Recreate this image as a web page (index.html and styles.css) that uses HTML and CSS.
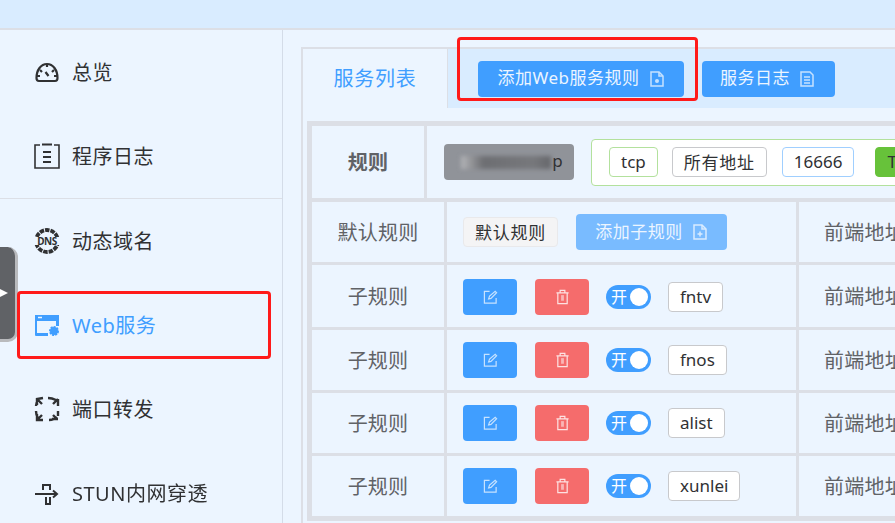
FILE: index.html
```html
<!DOCTYPE html>
<html lang="zh-CN">
<head>
  <meta charset="UTF-8">
  <meta name="viewport" content="width=device-width, initial-scale=1.0">
  <title>Web服务</title>
  <link rel="stylesheet" href="styles.css">
</head>
<body>
<div class="app">
  <div class="topbar"></div>
  <div class="layout">
    <nav class="sidebar">
      <a class="menu-item">
        <svg class="menu-icon" viewBox="0 0 26 26" fill="none" stroke="#303133" stroke-width="2.200"><path d="M5 22h16c1.500 0 2.500-1 2.500-3C23.500 11 19 5 13 5S2.500 11 2.500 19c0 2 1 3 2.500 3z"/><path d="M13 5v3M6 11l2 2M20 11l-2 2M3 17h3M20 17h3M11.500 13l3 4"/></svg>
        总览
      </a>
      <a class="menu-item">
        <svg class="menu-icon" viewBox="0 0 26 26" fill="none" stroke="#303133" stroke-width="1.600"><path d="M6 2H1v23h24V2h-5"/><path d="M8 1.500h10M9 9h8M9 14h8M9 19h8" stroke-width="2"/></svg>
        程序日志
      </a>
      <div class="menu-divider"></div>
      <a class="menu-item">
        <svg class="menu-icon" viewBox="0 0 26 26" fill="none"><circle cx="13" cy="13" r="11" stroke="#303133" stroke-width="3.800" stroke-dasharray="4.500 1"/><rect x="0" y="9" width="26" height="8" fill="#ecf5ff"/><text x="13" y="17" text-anchor="middle" class="dns-text">DNS</text></svg>
        动态域名
      </a>
      <a class="menu-item active">
        <svg class="menu-icon" viewBox="0 0 26 26"><path d="M2 3h23v11h-3v-5H3v12h11v3H2a1 1 0 0 1-1-1V4a1 1 0 0 1 1-1z" fill="#409eff"/><path d="M1 3h24v6H1z" fill="#409eff"/><path d="M4 5.500h4" stroke="#ecf5ff" stroke-width="1.500"/><circle cx="20" cy="19" r="4" fill="#409eff" stroke="#409eff" stroke-width="2" stroke-dasharray="2 1"/></svg>
        Web服务
      </a>
      <a class="menu-item">
        <svg class="menu-icon" viewBox="0 0 26 26" fill="none" stroke="#303133" stroke-width="2.400"><path d="M2 10c0-2 .5-4 2-6M9 2L3 3v6M3 3l5 5"/><path d="M14 2c3 0 6 1 8 2M24 10V3M24 3l-5 5"/><path d="M2 15c0 3 .5 5 2 7M3 18v6h6M3 24l5-5"/><path d="M15 24c3 0 6-1 8-3M24 15v5M24 23h-6M23 23l-4-4"/></svg>
        端口转发
      </a>
      <a class="menu-item">
        <svg class="menu-icon" viewBox="0 0 26 26" fill="none" stroke="#303133" stroke-width="2"><path d="M1 14h21M19 10.500l4 3.500-4 3.500"/><path d="M9 10V5h7v5M12 17v7h4v-7"/></svg>
        STUN内网穿透
      </a>
    </nav>

    <main class="main">
      <section class="panel">
        <div class="tab-header">
          <div class="tab-active">服务列表</div>
          <button class="btn btn-add">添加Web服务规则
            <svg class="btn-icon" viewBox="0 0 16 16" fill="none" stroke="#c6e2ff" stroke-width="1.500"><path d="M2 1h8l4 4v10H2z"/><path d="M10 1v4h4"/><circle cx="8" cy="10" r="2" fill="#c6e2ff" stroke="none"/></svg>
          </button>
          <button class="btn btn-log">服务日志
            <svg class="btn-icon" viewBox="0 0 16 16" fill="none" stroke="#c6e2ff" stroke-width="1.500"><path d="M2 1h9l3 3v11H2z"/><path d="M5 6h6M5 9h6M5 12h6"/></svg>
          </button>
        </div>

        <div class="rule-table">
          <div class="row row-rule">
            <div class="cell cell-rule-name">规则</div>
            <div class="cell cell-rule-body">
              <div class="masked-tag"><span class="smudge"></span>p</div>
              <div class="rule-box">
                <span class="tag tag-green">tcp</span>
                <span class="tag tag-gray tag-wide tag-after-addr">所有地址</span>
                <span class="tag tag-blue tag-after-port">16666</span>
                <span class="tag tag-solid">TLS</span>
              </div>
            </div>
          </div>

          <div class="row">
            <div class="cell cell-name">默认规则</div>
            <div class="cell cell-body">
              <span class="tag tag-default tag-wide">默认规则</span>
              <button class="btn btn-sub">添加子规则
                <svg class="btn-icon" viewBox="0 0 16 16" fill="none" stroke="#d9ecff" stroke-width="1.500"><path d="M2 1h8l4 4v10H2z"/><path d="M10 1v4h4M5.500 10h5M8 7.500v5"/></svg>
              </button>
            </div>
            <div class="cell cell-addr">前端地址</div>
          </div>

          <div class="row row-first">
            <div class="cell cell-name">子规则</div>
            <div class="cell cell-body">
              <button class="btn-square btn-edit"><svg class="sq-icon" viewBox="0 0 16 16" fill="none" stroke="#c6e2ff" stroke-width="1.300"><path d="M7 2H1.500v12.500H14V9"/><path d="M6 10l1-3 6-5 1.500 1.500-6 6z"/></svg></button>
              <button class="btn-square btn-del"><svg class="sq-icon" viewBox="0 0 16 16" fill="none" stroke="#fde2e2" stroke-width="1.300"><path d="M1.500 3.500h13M5.500 3V1h5v2M3 3.500v11.500h10V3.500"/><path d="M6.500 6v6h3V6z" fill="#fab6b6" stroke="none"/></svg></button>
              <span class="switch">开<i class="knob"></i></span>
              <span class="tag tag-gray">fntv</span>
            </div>
            <div class="cell cell-addr">前端地址</div>
          </div>

          <div class="row">
            <div class="cell cell-name">子规则</div>
            <div class="cell cell-body">
              <button class="btn-square btn-edit"><svg class="sq-icon" viewBox="0 0 16 16" fill="none" stroke="#c6e2ff" stroke-width="1.300"><path d="M7 2H1.500v12.500H14V9"/><path d="M6 10l1-3 6-5 1.500 1.500-6 6z"/></svg></button>
              <button class="btn-square btn-del"><svg class="sq-icon" viewBox="0 0 16 16" fill="none" stroke="#fde2e2" stroke-width="1.300"><path d="M1.500 3.500h13M5.500 3V1h5v2M3 3.500v11.500h10V3.500"/><path d="M6.500 6v6h3V6z" fill="#fab6b6" stroke="none"/></svg></button>
              <span class="switch">开<i class="knob"></i></span>
              <span class="tag tag-gray">fnos</span>
            </div>
            <div class="cell cell-addr">前端地址</div>
          </div>

          <div class="row">
            <div class="cell cell-name">子规则</div>
            <div class="cell cell-body">
              <button class="btn-square btn-edit"><svg class="sq-icon" viewBox="0 0 16 16" fill="none" stroke="#c6e2ff" stroke-width="1.300"><path d="M7 2H1.500v12.500H14V9"/><path d="M6 10l1-3 6-5 1.500 1.500-6 6z"/></svg></button>
              <button class="btn-square btn-del"><svg class="sq-icon" viewBox="0 0 16 16" fill="none" stroke="#fde2e2" stroke-width="1.300"><path d="M1.500 3.500h13M5.500 3V1h5v2M3 3.500v11.500h10V3.500"/><path d="M6.500 6v6h3V6z" fill="#fab6b6" stroke="none"/></svg></button>
              <span class="switch">开<i class="knob"></i></span>
              <span class="tag tag-gray">alist</span>
            </div>
            <div class="cell cell-addr">前端地址</div>
          </div>

          <div class="row">
            <div class="cell cell-name">子规则</div>
            <div class="cell cell-body">
              <button class="btn-square btn-edit"><svg class="sq-icon" viewBox="0 0 16 16" fill="none" stroke="#c6e2ff" stroke-width="1.300"><path d="M7 2H1.500v12.500H14V9"/><path d="M6 10l1-3 6-5 1.500 1.500-6 6z"/></svg></button>
              <button class="btn-square btn-del"><svg class="sq-icon" viewBox="0 0 16 16" fill="none" stroke="#fde2e2" stroke-width="1.300"><path d="M1.500 3.500h13M5.500 3V1h5v2M3 3.500v11.500h10V3.500"/><path d="M6.500 6v6h3V6z" fill="#fab6b6" stroke="none"/></svg></button>
              <span class="switch">开<i class="knob"></i></span>
              <span class="tag tag-gray">xunlei</span>
            </div>
            <div class="cell cell-addr">前端地址</div>
          </div>
        </div>
      </section>
    </main>
  </div>

  <div class="side-handle"><i class="handle-caret"></i></div>
  <div class="mark mark-menu"></div>
  <div class="mark mark-button"></div>
</div>
</body>
</html>
```

FILE: styles.css
```css
* {
  box-sizing: border-box;
}
html, body {
  margin: 0;
  height: 100%;
  overflow: hidden;
}
body {
  font-family: "Noto Sans", "Noto Sans CJK SC", sans-serif;
  font-size: 20px;
  color: #303133;
  background: #ecf5ff;
}
.app {
  position: relative;
  height: 523px;
  overflow: hidden;
  filter: blur(0.6px);
}
.topbar {
  height: 30px;
  background: #d9ecff;
  border-bottom: 2px solid #dcdfe6;
}
.layout {
  display: flex;
  height: 493px;
}

/* sidebar */
.sidebar {
  flex: 0 0 283px;
  border-right: 1px solid #d4dce8;
  background: #ecf5ff;
}
.menu-item {
  display: flex;
  align-items: center;
  height: 84px;
  padding: 0 0 1px 34px;
  letter-spacing: 0.500px;
  white-space: nowrap;
}
.menu-item.active {
  color: #409eff;
}
.menu-icon {
  width: 26px;
  height: 26px;
  margin: 1px 12px 0 0;
  flex: none;
}
.dns-text {
  font-size: 10px;
  font-weight: bold;
  fill: #303133;
  letter-spacing: -0.500px;
}
.menu-divider {
  height: 1px;
  background: #dcdfe6;
}

/* main panel */
.main {
  flex: 1;
  min-width: 0;
  padding: 17px 0 0 18px;
  overflow: hidden;
}
.panel {
  width: 760px;
  height: 600px;
  border: 2px solid #dcdfe6;
  background: #ecf5ff;
}
.tab-header {
  display: flex;
  align-items: center;
  height: 59px;
  background: #d9ecff;
}
.tab-active {
  display: flex;
  align-items: center;
  justify-content: center;
  align-self: stretch;
  width: 145px;
  height: 59px;
  margin-right: 30px;
  padding-bottom: 2px;
  color: #409eff;
  background: #ecf5ff;
  border-right: 1px solid #dcdfe6;
  letter-spacing: 0.750px;
}
.btn {
  display: flex;
  align-items: center;
  justify-content: center;
  height: 36px;
  padding: 0 0 4px;
  border: none;
  border-radius: 4px;
  background: #409eff;
  color: #ecf5ff;
  font: inherit;
  font-size: 17px;
  letter-spacing: 0.500px;
}
.btn-add {
  width: 206px;
  margin-right: 18px;
}
.btn-log {
  width: 133px;
  padding-right: 2px;
}
.btn-sub {
  width: 151px;
  margin-left: 18px;
  background: #79bbff;
}
.btn-icon {
  width: 16px;
  height: 16px;
  margin: 4px 0 0 9px;
}

/* table */
.rule-table {
  display: flex;
  flex-direction: column;
  gap: 3px;
  width: 740px;
  margin: 13px 0 0 4px;
  padding: 5px;
  background: #dcdfe6;
}
.row {
  display: flex;
  gap: 3px;
  height: 60px;
}
.row-rule {
  height: 72px;
  margin-bottom: 1px;
}
.row-first {
  height: 62px;
}
.row-first .cell-body {
  padding-top: 2px;
}
.cell {
  display: flex;
  align-items: center;
  background: #ecf5ff;
  color: #606266;
  letter-spacing: 0.250px;
  white-space: nowrap;
}
.cell-rule-name {
  flex: 0 0 112px;
  justify-content: center;
  padding-bottom: 2px;
  font-weight: bold;
}
.cell-rule-body {
  flex: 1;
  padding-left: 17px;
  overflow: hidden;
}
.cell-name {
  flex: 0 0 132px;
  justify-content: center;
  padding: 0 0 2px;
}
.cell-body {
  flex: 0 0 349px;
  padding-left: 16px;
}
.cell-addr {
  flex: 1;
  padding: 0 0 2px 25px;
}

/* tags */
.tag {
  display: inline-flex;
  align-items: center;
  flex: none;
  height: 30px;
  padding: 0 11px 1px;
  border: 1px solid #c8c9cc;
  border-radius: 4px;
  background: #fff;
  color: #303133;
  font-size: 17px;
  letter-spacing: 0;
}
.tag-wide {
  letter-spacing: 0.750px;
}
.tag-green {
  border-color: #b3e19d;
}
.tag-gray {
  border-color: #c8c9cc;
}
.tag-blue {
  border-color: #a0cfff;
}
.tag-solid {
  background: #67c23a;
  border-color: #67c23a;
}
.tag-default {
  background: #f4f4f5;
  border-color: #e9e9eb;
}
.tag-after-addr {
  margin-right: 1px;
}
.tag-after-port {
  margin-right: 7px;
}
.masked-tag {
  display: flex;
  align-items: center;
  justify-content: flex-end;
  flex: none;
  width: 130px;
  height: 36px;
  margin-right: 17px;
  padding: 0 11px 3px 0;
  border-radius: 4px;
  background: #909399;
  color: #303133;
  font-size: 17px;
}
.smudge {
  width: 90px;
  height: 13px;
  margin: 3px 1px 0 0;
  background: linear-gradient(to right, #b4b5b8, #6d6e72 25%, #77787c 80%, #66676b);
  filter: blur(2px);
}
.rule-box {
  display: flex;
  align-items: center;
  gap: 14px;
  flex: none;
  width: 320px;
  height: 47px;
  padding-left: 17px;
  border: 1px solid #b3e19d;
  border-radius: 4px;
  background: #fff;
}

/* row actions */
.btn-square {
  display: flex;
  align-items: center;
  justify-content: center;
  width: 54px;
  height: 36px;
  margin-right: 18px;
  padding: 0;
  border: none;
  border-radius: 4px;
}
.btn-edit {
  background: #409eff;
}
.btn-del {
  background: #f56c6c;
  margin-right: 17px;
}
.sq-icon {
  width: 15px;
  height: 16px;
}
.switch {
  display: flex;
  align-items: center;
  justify-content: space-between;
  flex: none;
  width: 45px;
  height: 24px;
  margin-right: 17px;
  padding: 0 3px 2px 5px;
  border-radius: 12px;
  background: #409eff;
  color: #fff;
  font-size: 16px;
  letter-spacing: 0;
}
.knob {
  width: 18px;
  height: 18px;
  margin-top: 2px;
  border-radius: 50%;
  background: #fff;
}

/* overlays */
.side-handle {
  position: absolute;
  left: 0;
  top: 247px;
  width: 18px;
  height: 95px;
  background: #606266;
  border-right: 3px solid #b9babd;
  border-bottom: 3px solid #b9babd;
  border-radius: 0 10px 10px 0;
}
.handle-caret {
  position: absolute;
  left: 0;
  top: 42px;
  border-left: 8px solid #fff;
  border-top: 4px solid transparent;
  border-bottom: 4px solid transparent;
}
.mark {
  position: absolute;
  border: 3px solid #ff1a1a;
  border-radius: 4px;
}
.mark-menu {
  left: 17px;
  top: 291px;
  width: 254px;
  height: 68px;
}
.mark-button {
  left: 457px;
  top: 37px;
  width: 241px;
  height: 64px;
}
```
